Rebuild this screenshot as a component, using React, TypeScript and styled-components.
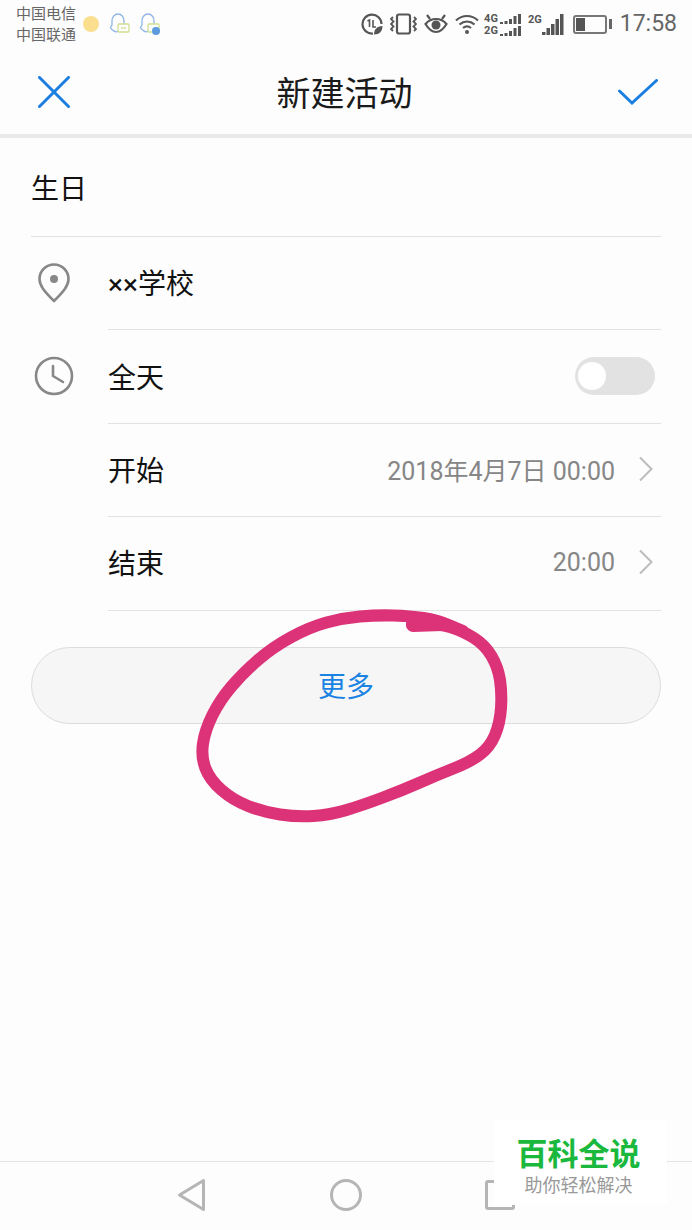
import React from "react";
import styled, { createGlobalStyle } from "styled-components";

const GlobalStyle = createGlobalStyle`
  html, body {
    margin: 0;
    padding: 0;
    background: #fdfdfd;
  }
  * {
    box-sizing: border-box;
  }
`;

const scribble: [number, number][] = [
  [412, 624], [437, 623], [463, 631], [485, 645], [498, 667], [502, 693], [500, 723], [490, 747],
  [470, 762], [437, 775], [403, 790], [363, 805], [330, 815], [297, 817], [263, 812], [233, 800],
  [210, 780], [201, 757], [205, 730], [220, 700], [243, 673], [273, 647], [310, 627], [343, 618],
  [377, 615], [410, 616], [437, 620], [463, 631],
];

function smoothPath(points: [number, number][]) {
  let d = `M${points[0][0]} ${points[0][1]}`;
  for (let i = 1; i < points.length - 1; i++) {
    const mx = (points[i][0] + points[i + 1][0]) / 2;
    const my = (points[i][1] + points[i + 1][1]) / 2;
    d += ` Q${points[i][0]} ${points[i][1]} ${mx} ${my}`;
  }
  const last = points[points.length - 1];
  return `${d} L${last[0]} ${last[1]}`;
}

function ListenIcon({ blue }: { blue?: boolean }) {
  return (
    <svg width="22" height="24" viewBox="0 0 22 24" fill="none">
      <path d="M5 19c-1.500-1-3.500-2-3.500-3.500 0-1 1.500-1.500 1.500-2.500V9c0-4 2.500-7 6-7s6 3 6 7v3" stroke="#8fb7e6" strokeWidth="1.300" strokeLinecap="round" />
      <path d="M5 19c1 1 3 1 4 0" stroke="#8fb7e6" strokeWidth="1.300" strokeLinecap="round" />
      <rect x="9" y="12" width="11" height="8" rx="1" fill="#fdfdfd" stroke="#cfe08e" strokeWidth="1.300" />
      {blue ? <circle cx="17" cy="19" r="4" fill="#5c9be0" /> : <path d="M12 16h5" stroke="#cfe08e" strokeWidth="1.300" />}
    </svg>
  );
}

function DataSaverIcon() {
  return (
    <svg width="22" height="22" viewBox="0 0 22 22" fill="none">
      <path d="M12 20.500A9.500 9.500 0 1 1 20.500 11" stroke="#555" strokeWidth="2.200" />
      <path d="M6.500 8l2-1v7M12 7v7h3" stroke="#555" strokeWidth="1.600" />
      <path d="M13 21.500c0-5 3-8.500 8.500-8.500 0 5-3 8.500-8.500 8.500z" fill="#555" />
    </svg>
  );
}

function VibrateIcon() {
  return (
    <svg width="27" height="22" viewBox="0 0 27 22" fill="none" stroke="#555">
      <rect x="7" y="1.500" width="13" height="19" rx="2" strokeWidth="2.200" />
      <path d="M3 4L1 6l2.500 2.500L1 11l2.500 2.500L1 16l2 2M24 4l2 2-2.500 2.500L26 11l-2.500 2.500L26 16l-2 2" strokeWidth="1.800" />
    </svg>
  );
}

function EyeIcon() {
  return (
    <svg width="24" height="20" viewBox="0 0 24 20" fill="none" stroke="#555">
      <path d="M1.500 10c3-3.500 6.500-5 10.500-5s7.500 1.500 10.500 5c-3 5-6.500 8-10.500 8S4.500 15 1.500 10z" strokeWidth="2.200" />
      <circle cx="12" cy="11" r="4.500" fill="#555" strokeWidth="0" />
      <path d="M3 1l3 4M21 1l-3 4" strokeWidth="2.200" />
    </svg>
  );
}

function WifiIcon() {
  return (
    <svg width="24" height="20" viewBox="0 0 24 20" fill="none" stroke="#555" strokeWidth="2.200">
      <path d="M1 6.500c6.500-6 15.500-6 22 0M4.500 10.500c4.500-4 10.500-4 15 0M8 14c2.500-2 5.500-2 8 0" />
      <circle cx="12" cy="18" r="2" fill="#555" stroke="none" />
    </svg>
  );
}

function BarsIcon({ small }: { small?: boolean }) {
  const heights = small ? [2, 3, 5, 8, 10] : [3, 7, 11, 16, 21];
  const h = small ? 10 : 21;
  const w = small ? 21 : 22;
  return (
    <svg width={w} height={h} viewBox={`0 0 ${w} ${h}`} fill="#555">
      {heights.map((v, i) => (
        <rect key={i} x={i * 4.500} y={h - v} width={small ? 3 : 3.500} height={v} />
      ))}
    </svg>
  );
}

function Chevron() {
  return (
    <svg width="15" height="26" viewBox="0 0 15 26" fill="none">
      <path d="M2 1.500L13.500 13 2 24.500" stroke="#bcbcbc" strokeWidth="2" />
    </svg>
  );
}

function App() {
  return (
    <Screen>
      <GlobalStyle />
      <StatusBar>
        <StatusLeft>
          <Carriers>
            <span>中国电信</span>
            <span>中国联通</span>
          </Carriers>
          <YellowDot />
          <ListenIcons>
            <ListenIcon />
            <ListenIcon blue />
          </ListenIcons>
        </StatusLeft>
        <StatusRight>
          <DataSaverIcon />
          <VibrateIcon />
          <EyeIcon />
          <WifiIcon />
          <DualSignal>
            <SignalLine>
              <NetLabel>4G</NetLabel>
              <BarsIcon small />
            </SignalLine>
            <SignalLine>
              <NetLabel>2G</NetLabel>
              <BarsIcon small />
            </SignalLine>
          </DualSignal>
          <SingleSignal>
            <NetLabel>2G</NetLabel>
            <BarsIcon />
          </SingleSignal>
          <Battery>
            <BatteryBody>
              <BatteryLevel />
            </BatteryBody>
            <BatteryTip />
          </Battery>
          <Time>17:58</Time>
        </StatusRight>
      </StatusBar>

      <Header>
        <svg width="32" height="32" viewBox="0 0 32 32" fill="none">
          <path d="M1.500 1.500L30.500 30.500M30.500 1.500L1.500 30.500" stroke="#1a7fe0" strokeWidth="3" strokeLinecap="round" />
        </svg>
        <Title>新建活动</Title>
        <svg width="40" height="26" viewBox="0 0 40 26" fill="none">
          <path d="M1.500 12L14 24 38.500 1.500" stroke="#1a7fe0" strokeWidth="3" strokeLinecap="round" />
        </svg>
      </Header>

      <Form>
        <NameRow>生日</NameRow>
        <Row>
          <IconCell>
            <svg width="32" height="40" viewBox="0 0 32 40" fill="none">
              <path d="M16 38C6 28 1.500 22.500 1.500 16a14.500 14.500 0 0 1 29 0C30.500 22.500 26 28 16 38z" stroke="#888" strokeWidth="2.600" strokeLinejoin="round" />
              <circle cx="16" cy="16" r="4" fill="#888" />
            </svg>
          </IconCell>
          <RowBody>
            <Label>××学校</Label>
          </RowBody>
        </Row>
        <Row>
          <IconCell>
            <svg width="40" height="40" viewBox="0 0 40 40" fill="none" stroke="#888" strokeWidth="2.600">
              <circle cx="20" cy="20" r="18" />
              <path d="M19 10v10l10 6" strokeLinecap="round" strokeLinejoin="round" />
            </svg>
          </IconCell>
          <RowBody>
            <Label>全天</Label>
            <Toggle>
              <Knob />
            </Toggle>
          </RowBody>
        </Row>
        <Row>
          <IconCell />
          <RowBody>
            <Label>开始</Label>
            <Value>
              2018年4月7日 00:00
              <Chevron />
            </Value>
          </RowBody>
        </Row>
        <Row>
          <IconCell />
          <RowBody>
            <Label>结束</Label>
            <Value>
              20:00
              <Chevron />
            </Value>
          </RowBody>
        </Row>
        <MoreButton>更多</MoreButton>
      </Form>

      <NavBar>
        <svg width="30" height="34" viewBox="0 0 30 34" fill="none">
          <path d="M26.500 2.500v29L2.500 17z" stroke="#b5b5b5" strokeWidth="3" strokeLinejoin="round" />
        </svg>
        <svg width="32" height="32" viewBox="0 0 32 32" fill="none">
          <circle cx="16" cy="16" r="14.500" stroke="#b5b5b5" strokeWidth="3" />
        </svg>
        <svg width="30" height="30" viewBox="0 0 30 30" fill="none">
          <rect x="1.500" y="1.500" width="27" height="27" rx="1.500" stroke="#b5b5b5" strokeWidth="3" />
        </svg>
      </NavBar>

      <Scribble width="692" height="1230" viewBox="0 0 692 1230" fill="none">
        <path d={smoothPath(scribble)} stroke="#dc3278" strokeWidth="12" strokeLinecap="round" strokeLinejoin="round" />
        <path d="M413 625L442 624" stroke="#dc3278" strokeWidth="14" strokeLinecap="round" />
      </Scribble>

      <Watermark>
        <WatermarkTitle>百科全说</WatermarkTitle>
        <WatermarkSub>助你轻松解决</WatermarkSub>
      </Watermark>
    </Screen>
  );
}

export default App;

const Screen = styled.div`
  position: relative;
  width: 692px;
  height: 1230px;
  overflow: hidden;
  display: flex;
  flex-direction: column;
  background: #fdfdfd;
  font-family: Roboto, "Noto Sans CJK SC", sans-serif;
`;

const StatusBar = styled.div`
  height: 48px;
  padding: 0 15px 0 16px;
  display: flex;
  align-items: center;
  justify-content: space-between;
`;

const StatusLeft = styled.div`
  display: flex;
  align-items: center;
`;

const Carriers = styled.div`
  display: flex;
  flex-direction: column;
  gap: 3px;
  font-size: 15px;
  line-height: 18px;
  color: #666;
  margin-right: 7px;
`;

const YellowDot = styled.div`
  width: 16px;
  height: 16px;
  border-radius: 50%;
  background: #fae08e;
  margin-right: 10px;
`;

const ListenIcons = styled.div`
  display: flex;
  align-items: center;
  gap: 8px;
`;

const StatusRight = styled.div`
  display: flex;
  align-items: center;
  gap: 7px;
`;

const DualSignal = styled.div`
  display: flex;
  flex-direction: column;
  gap: 1px;
  margin-left: -2px;
`;

const SignalLine = styled.div`
  display: flex;
  align-items: flex-end;
  gap: 2px;
`;

const SingleSignal = styled.div`
  display: flex;
  align-items: flex-start;
  gap: 0;
  margin-right: 2px;
`;

const NetLabel = styled.span`
  font-size: 11px;
  line-height: 11px;
  font-weight: 700;
  color: #555;
`;

const Battery = styled.div`
  display: flex;
  align-items: center;
  gap: 2px;
`;

const BatteryBody = styled.div`
  width: 34px;
  height: 19px;
  border: 2px solid #777;
  border-radius: 3px;
  padding: 1px;
`;

const BatteryLevel = styled.div`
  width: 9px;
  height: 100%;
  background: #555;
`;

const BatteryTip = styled.div`
  width: 3px;
  height: 10px;
  background: #666;
`;

const Time = styled.div`
  font-size: 23px;
  line-height: 28px;
  color: #666;
  margin-left: 1px;
`;

const Header = styled.div`
  height: 90px;
  padding: 2px 34px 0 38px;
  display: flex;
  align-items: center;
  justify-content: space-between;
  border-bottom: 4px solid #e9e9e9;
`;

const Title = styled.div`
  font-size: 34px;
  line-height: 44px;
  color: #1a1a1a;
  margin: 4px 0 0 1px;
`;

const Form = styled.div`
  padding: 0 31px;
  display: flex;
  flex-direction: column;
`;

const NameRow = styled.div`
  height: 99px;
  display: flex;
  align-items: center;
  font-size: 28px;
  color: #111;
  border-bottom: 1px solid #e2e2e2;
`;

const Row = styled.div`
  display: flex;
  height: 93.400px;
`;

const IconCell = styled.div`
  width: 77px;
  flex-shrink: 0;
  padding: 0 31px 2px 0;
  display: flex;
  align-items: center;
  justify-content: center;
`;

const RowBody = styled.div`
  flex: 1;
  display: flex;
  align-items: center;
  justify-content: space-between;
  padding-bottom: 2px;
  border-bottom: 1px solid #e2e2e2;
`;

const Label = styled.div`
  font-size: 28px;
  color: #111;
`;

const Value = styled.div`
  display: flex;
  align-items: center;
  gap: 23px;
  padding-right: 8px;
  font-size: 25px;
  color: #868686;
`;

const Toggle = styled.div`
  width: 80px;
  height: 38px;
  margin-right: 6px;
  padding: 5px 3px;
  border-radius: 19px;
  background: #e2e2e2;
`;

const Knob = styled.div`
  width: 28px;
  height: 28px;
  border-radius: 50%;
  background: #fff;
`;

const MoreButton = styled.div`
  height: 77px;
  margin-top: 36px;
  display: flex;
  align-items: center;
  justify-content: center;
  border: 1px solid #dcdcdc;
  border-radius: 39px;
  background: #f6f6f6;
  font-size: 28px;
  color: #1a82e2;
`;

const NavBar = styled.div`
  margin-top: auto;
  height: 69px;
  border-top: 1px solid #e4e4e4;
  padding: 0 177px 2px 177px;
  display: flex;
  align-items: center;
  justify-content: space-between;
`;

const Scribble = styled.svg`
  position: absolute;
  left: 0;
  top: 0;
  pointer-events: none;
`;

const Watermark = styled.div`
  position: absolute;
  left: 494px;
  top: 1120px;
  width: 173px;
  height: 85px;
  background: #fff;
  display: flex;
  flex-direction: column;
  align-items: center;
  padding: 15px 4px 0 0;
`;

const WatermarkTitle = styled.div`
  font-size: 31px;
  line-height: 40px;
  font-weight: 700;
  color: #1ab83c;
`;

const WatermarkSub = styled.div`
  font-size: 18px;
  line-height: 22px;
  color: #999;
`;
